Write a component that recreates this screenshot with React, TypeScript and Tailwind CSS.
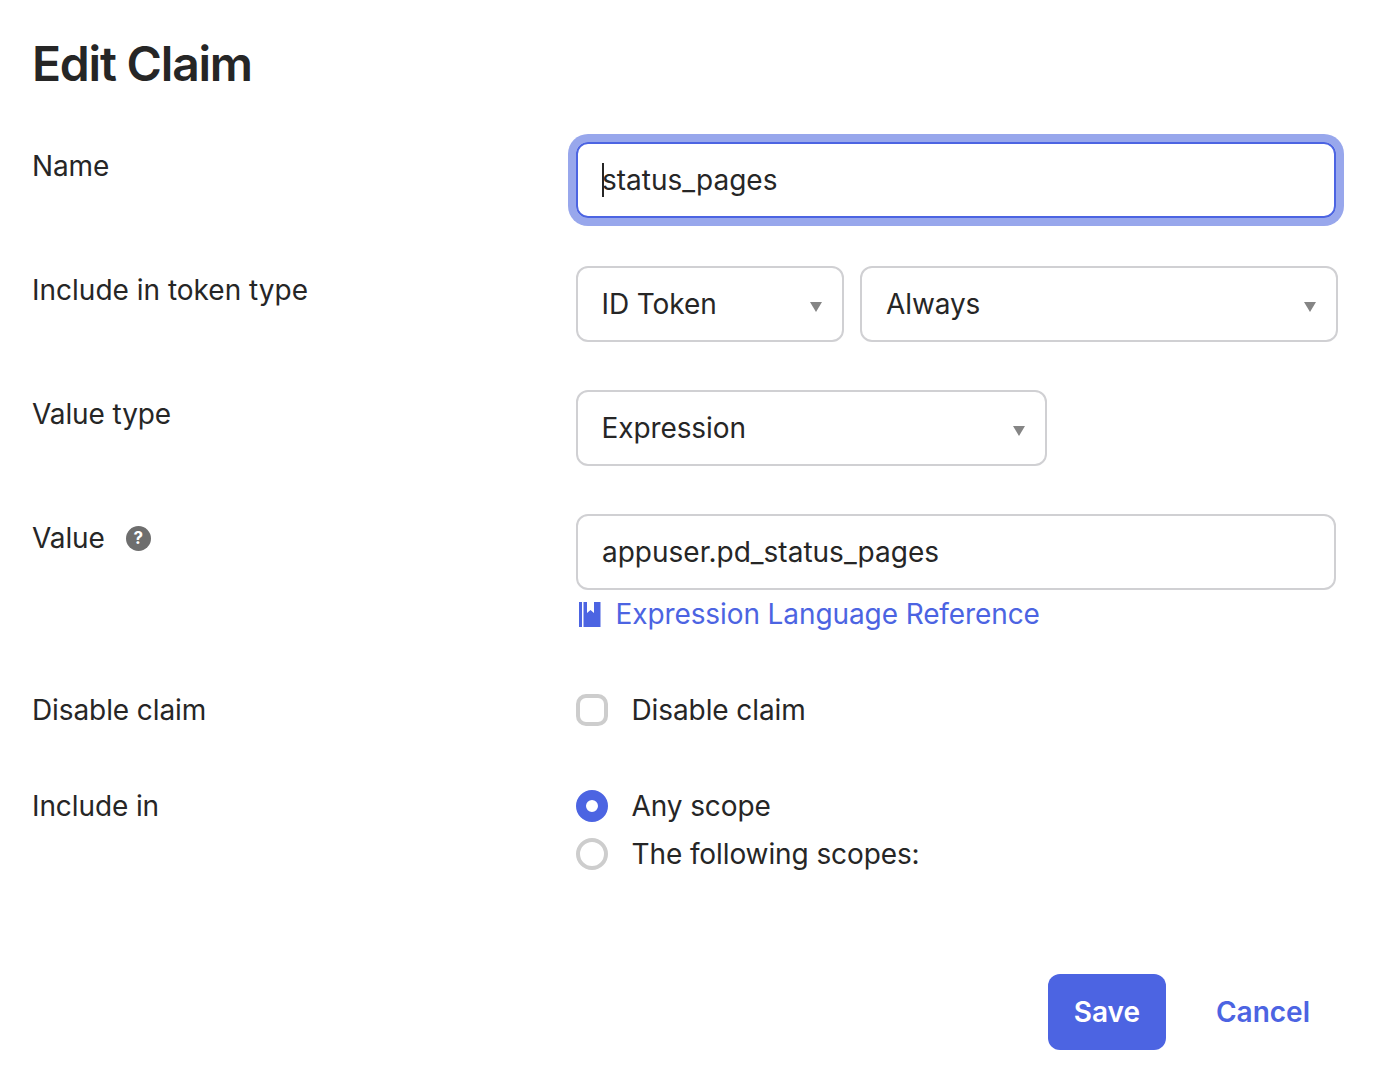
import React from "react";

function Caret() {
  return (
    <svg width="12" height="10" viewBox="0 0 12 10" className="absolute top-[34px] right-[20px]">
      <path d="M0 0H12L6 10Z" fill="#858585" />
    </svg>
  );
}

function Select({ label, className }: { label: string; className: string }) {
  return (
    <div className={`relative h-[76px] shrink-0 flex items-center border-2 border-[#d0d0d3] rounded-[12px] ${className}`}>
      <span>{label}</span>
      <Caret />
    </div>
  );
}

function Row({ label, children, mb, help, labelClass }: { label: string; children: React.ReactNode; mb: string; help?: boolean; labelClass?: string }) {
  return (
    <div className={`flex ${mb}`}>
      <div className="w-[544px] shrink-0 h-[48px] flex items-center">
        <span className={labelClass}>{label}</span>
        {help && (
          <span className="ml-[21px] w-[25px] h-[25px] rounded-full bg-[#6e6e6e] text-white text-[17px] leading-[25px] font-bold text-center">?</span>
        )}
      </div>
      <div className="w-[768px] shrink-0">{children}</div>
    </div>
  );
}

export default function App() {
  return (
    <div className="w-[1374px] h-[1080px] bg-white text-[#262626] text-[28px] leading-[48px] tracking-[-0.1px] pl-[32px] font-['Inter',sans-serif] overflow-hidden">
      <h1 className="h-[142px] pt-[33px] text-[48px] leading-[62px] font-semibold tracking-[-1.2px]">Edit Claim</h1>

      <Row label="Name" mb="mb-[48px]">
        <div className="relative w-[760px] h-[76px] flex items-center pl-[24px] border-2 border-[#4c64e2] rounded-[12px] shadow-[0_0_0_8px_#98a7ec] tracking-normal">
          <span>status_pages</span>
          <span className="absolute left-[24px] top-[19px] w-[2px] h-[34px] bg-[#262626]" />
        </div>
      </Row>

      <Row label="Include in token type" labelClass="tracking-normal" mb="mb-[48px]">
        <div className="flex gap-[16px]">
          <Select label="ID Token" className="w-[268px] pl-[23.5px]" />
          <Select label="Always" className="w-[478px] pl-[24px]" />
        </div>
      </Row>

      <Row label="Value type" mb="mb-[48px]">
        <Select label="Expression" className="w-[471px] pl-[23.5px]" />
      </Row>

      <Row label="Value" help mb="mb-[48px]">
        <div className="w-[760px] h-[76px] flex items-center pl-[24px] border-2 border-[#d0d0d3] rounded-[12px] tracking-normal">
          <span>appuser.pd_status_pages</span>
        </div>
        <div className="h-[48px] flex items-center text-[#4c64e2]">
          <svg width="22" height="25" viewBox="0 0 22 25" className="ml-[3px] mr-[14.500px]">
            <rect x="0" y="0" width="3" height="25" fill="#4c64e2" />
            <path d="M4.500 0H8V11L11.500 8L15 11V0H21.500V25H4.500Z" fill="#4c64e2" />
          </svg>
          <span>Expression Language Reference</span>
        </div>
      </Row>

      <Row label="Disable claim" mb="mb-[48px]">
        <div className="flex items-center h-[48px]">
          <span className="w-[32px] h-[32px] rounded-[10px] border-4 border-[#cdcdcd] mr-[23.500px]" />
          <span>Disable claim</span>
        </div>
      </Row>

      <Row label="Include in" mb="mb-[96px]">
        <div className="flex items-center h-[48px]">
          <span className="w-[32px] h-[32px] rounded-full border-[10px] border-[#4c64e2] mr-[23.500px]" />
          <span>Any scope</span>
        </div>
        <div className="flex items-center h-[48px]">
          <span className="w-[32px] h-[32px] rounded-full border-4 border-[#cdcdcd] mr-[23.500px]" />
          <span>The following scopes:</span>
        </div>
      </Row>

      <div className="flex justify-end w-[1278px] items-center font-semibold tracking-normal">
        <button className="w-[118px] h-[76px] rounded-[12px] bg-[#4c64e2] text-white">Save</button>
        <button className="ml-[50px] text-[#4c64e2]">Cancel</button>
      </div>
    </div>
  );
}
